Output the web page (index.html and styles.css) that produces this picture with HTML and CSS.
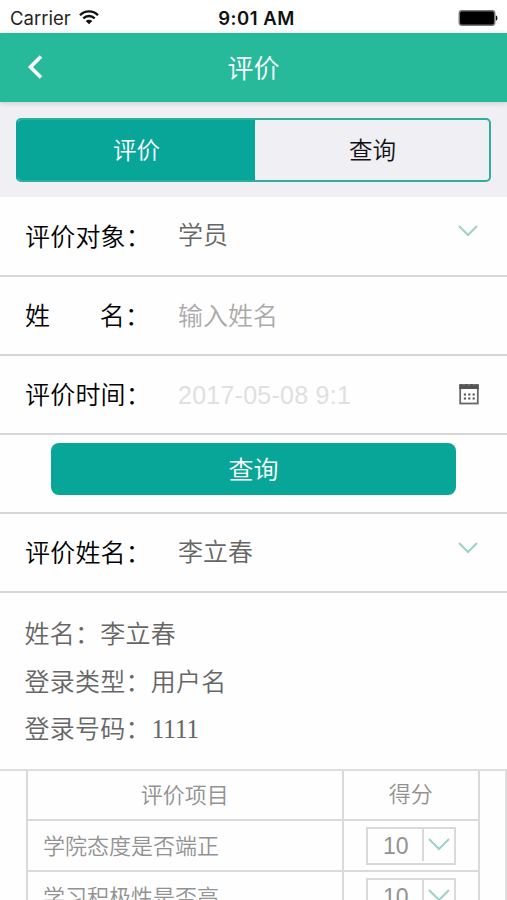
FILE: index.html
```html
<!DOCTYPE html>
<html lang="zh-CN">
<head>
<meta charset="utf-8">
<title>评价</title>
<link rel="stylesheet" href="styles.css">
</head>
<body>
<div class="status">
  <div class="carrier"><span>Carrier</span>
    <svg width="20" height="15" viewBox="0 0 20 15" fill="none" stroke="#111" stroke-width="2.3"><path d="M1 5.2C6 .1 14 .1 19 5.2M4.3 8.4c3.2-3.2 8.2-3.2 11.4 0"/><path d="M10 14.2 6.7 11c1.9-1.8 4.7-1.8 6.6 0z" fill="#111" stroke="none"/></svg>
  </div>
  <div class="time">9:01 AM</div>
  <svg class="battery" width="40" height="16" viewBox="0 0 40 16"><rect x="1.3" y=".8" width="35.4" height="14.4" rx="2.6" fill="#000" stroke="#777" stroke-width="1.5"/><path d="M37.800 5.200c2.200.6 2.200 5 0 5.600z" fill="#111"/></svg>
</div>
<header class="header">
  <svg class="back" width="16" height="24" viewBox="0 0 16 24" fill="none" stroke="#fff" stroke-width="3.6"><path d="M14 1.500 3.500 12 14 22.500"/></svg>
  <h1 class="title">评价</h1>
</header>
<div class="tabs"><div class="segment"><div class="tab active">评价</div><div class="tab">查询</div></div></div>
<main>
  <div class="row"><div class="label">评价对象：</div><div class="value">学员</div>
    <svg class="chevron" width="20" height="12" viewBox="0 0 20 12"><path d="M1 1l9 9 9-9"/></svg></div>
  <div class="row name-row"><div class="label split"><span>姓</span><span>名：</span></div><div class="value hint">输入姓名</div></div>
  <div class="row time-row"><div class="label">评价时间：</div><div class="value date">2017-05-08 9:1</div>
    <svg class="calendar" width="20" height="22" viewBox="0 0 20 22"><rect x="1.200" y="2" width="17.600" height="18.500" fill="#fff" stroke="#666" stroke-width="1.800"/><path d="M.3 1.500h3.200L5 3l1.500-2H8l1.500 2h1L12 1h1.500L15 3l1.500-1.500h3.200V6H.3z" fill="#555"/><path d="M4.800 11.500h11M4.800 15.500h11" stroke="#555" stroke-width="2.200" stroke-dasharray="2.200 2.200"/></svg></div>
  <div class="action"><div class="button">查询</div></div>
  <div class="row person"><div class="label">评价姓名：</div><div class="value">李立春</div>
    <svg class="chevron" width="20" height="12" viewBox="0 0 20 12"><path d="M1 1l9 9 9-9"/></svg></div>
  <div class="info"><div>姓名：李立春</div><div>登录类型：用户名</div><div>登录号码：<span class="number">1111</span></div></div>
  <div class="sheet">
    <div class="table">
      <div class="cell head">评价项目</div><div class="cell head score-head">得分</div>
      <div class="cell item">学院态度是否端正</div>
      <div class="cell score"><div class="select"><span class="num">10</span><span class="drop"><svg class="chevron" width="22" height="13" viewBox="0 0 22 13"><path d="M1 1l10 10L21 1"/></svg></span></div></div>
      <div class="cell item">学习积极性是否高</div>
      <div class="cell score"><div class="select"><span class="num">10</span><span class="drop"><svg class="chevron" width="22" height="13" viewBox="0 0 22 13"><path d="M1 1l10 10L21 1"/></svg></span></div></div>
    </div>
  </div>
</main>
</body>
</html>
```
FILE: styles.css
```css
* { box-sizing: border-box; }
html, body { margin: 0; height: 900px; overflow: hidden; }
body { width: 507px; background: #fefefe; color: #111; font-family: "Liberation Sans", "Noto Sans CJK SC", sans-serif; font-size: 25px; font-weight: 350; }
svg { display: block; flex: none; }
.status { height: 33px; display: grid; grid-template-columns: 1fr auto 1fr; align-items: center; padding: 2px 9px 0 10px; background: #fff; font: 19px/30px Inter, sans-serif; color: #222; }
.carrier { display: flex; align-items: center; gap: 8px; font-size: 18.5px; }
.time { font-size: 18.5px; font-weight: 600; color: #111; letter-spacing: .5px; padding-left: 5px; }
.battery { justify-self: end; }
.header { height: 69px; display: grid; grid-template-columns: 80px 1fr 80px; align-items: center; background: #27ba9a; box-shadow: 0 1px 5px #c4cac8; position: relative; }
.back { margin: -1px 0 0 27px; }
.title { margin: 0; padding-top: 2px; text-align: center; color: #fff; font-size: 26px; line-height: 40px; font-weight: 350; }
.tabs { height: 95px; padding: 16px 16px 15px; background: #efeff4; }
.segment { height: 64px; display: grid; grid-template-columns: 237px 1fr; border: 2px solid #2daf9f; border-left-color: #07a699; border-radius: 5px; overflow: hidden; background: #efeff4; }
.tab { display: flex; align-items: center; justify-content: center; font-size: 23.5px; padding: 0 0 2px 1px; }
.tab.active { color: #fff; background: #07a699; padding-left: 0; }
.row { height: 80px; display: grid; grid-template-columns: 153px 1fr auto; align-items: center; padding: 0 29px 0 25px; border-bottom: 2px solid #d6d6d6; line-height: 36px; }
.row .chevron { margin-top: -10px; }
.name-row, .time-row { height: 79px; }
.label { white-space: nowrap; color: #000; letter-spacing: .2px; }
.row .label { padding-top: 1px; }
.split { display: flex; gap: 49.500px; }
.value { color: #666; padding-bottom: 2px; }
.hint { color: #aaa; padding: 0; }
.date { color: #e0e0e0; padding: 0; letter-spacing: .25px; }
.calendar { margin: -2px -1px 0 0; }
.chevron { fill: none; stroke: #9ed2c7; stroke-width: 2; }
.action { height: 79px; padding: 8px 51px 0; border-bottom: 2px solid #d6d6d6; }
.button { height: 52px; border-radius: 8px; background: #07a699; color: #fff; display: flex; align-items: center; justify-content: center; padding-bottom: 2px; }
.person { height: 79px; }
.info { height: 176px; padding: 18px 24.5px 0; color: #666; line-height: 47.500px; letter-spacing: .25px; }
.number { font-family: "Liberation Serif", serif; font-size: 25px; letter-spacing: -.9px; display: inline-block; line-height: 30px; transform: scaleY(1.1); transform-origin: 50% 75%; font-kerning: none; margin-left: 1px; }
.sheet { height: 131px; border-top: 2px solid #dedede; border-right: 2px solid #dedede; padding-left: 26px; overflow: hidden; }
.table { width: 454px; display: grid; grid-template-columns: 315.500px 136.500px; grid-template-rows: 50px 51px 51px; border-left: 2px solid #dadada; }
.cell { border-right: 2px solid #dadada; border-bottom: 2px solid #dadada; display: flex; align-items: center; color: #929292; font-size: 22px; padding-bottom: 3px; }
.head { justify-content: center; padding-bottom: 4px; }
.score-head { padding-bottom: 7px; }
.item { padding-left: 15px; }
.score { justify-content: center; padding-bottom: 0; }
.select { width: 90px; height: 38px; border: 2px solid #dadada; display: flex; align-items: center; }
.num { flex: 1; text-align: center; font-size: 23px; padding: 2px 0 0 2px; }
.drop { height: 32px; width: 32px; margin-bottom: 2px; border-left: 2px solid #dadada; display: flex; align-items: center; justify-content: center; }
```
